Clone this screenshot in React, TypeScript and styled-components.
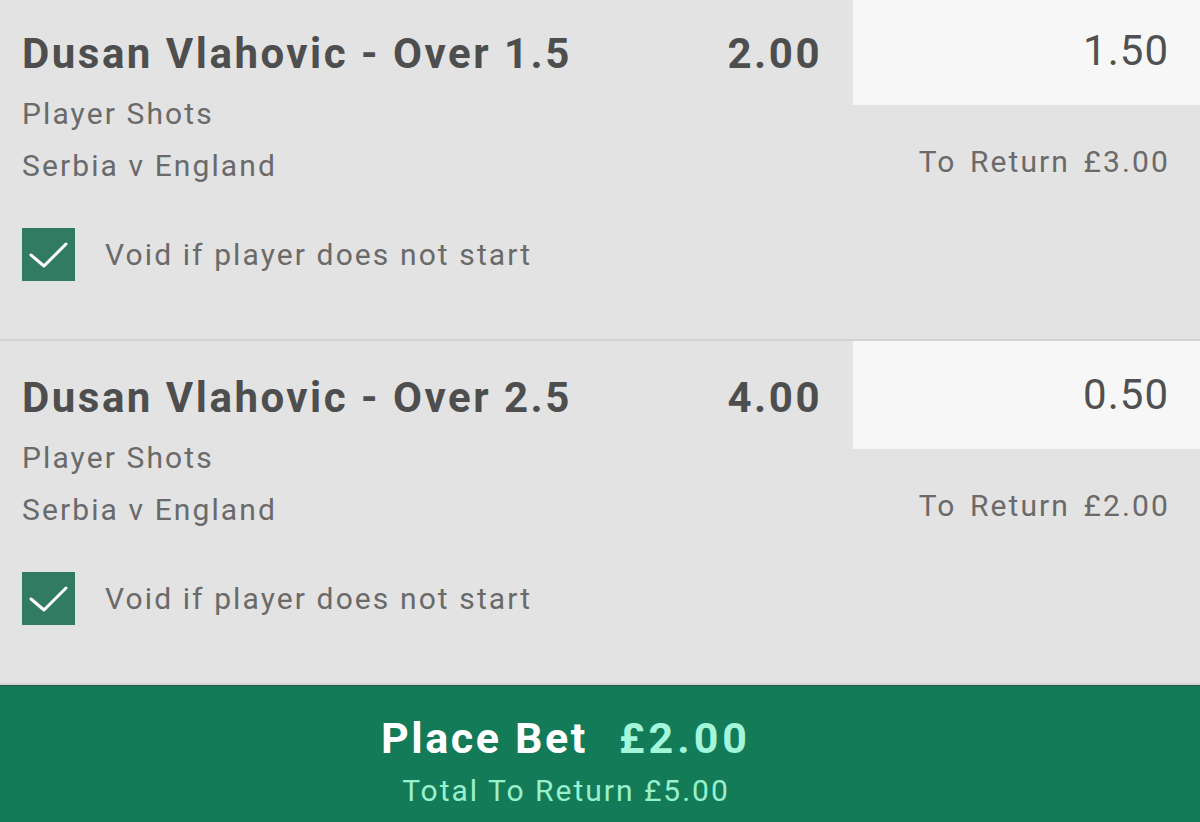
import React from 'react'
import styled, { createGlobalStyle } from 'styled-components'

const GlobalStyle = createGlobalStyle`
  html, body {
    margin: 0;
    padding: 0;
    background: #e3e3e3;
    font-family: Roboto, "Liberation Sans", Arial, sans-serif;
    -webkit-font-smoothing: antialiased;
  }
`

const BetSlip = styled.div`
  width: 1200px;
  height: 822px;
  overflow: hidden;
  display: flex;
  flex-direction: column;
  background: #e3e3e3;
`

const Selection = styled.section<{ $first?: boolean }>`
  box-sizing: border-box;
  height: 344px;
  flex-shrink: 0;
  margin-top: ${p => (p.$first ? '-3px' : '0')};
  display: grid;
  grid-template-columns: 1fr 347px;
  border-bottom: 2px solid #d3d3d3;
`

const Details = styled.div`
  padding: 32px 0 0 22px;
  display: flex;
  flex-direction: column;
`

const Header = styled.div`
  display: flex;
  align-items: center;
  justify-content: space-between;
  padding-right: 31px;
`

const Title = styled.h2`
  margin: 0;
  font-size: 42px;
  line-height: 50px;
  font-weight: 700;
  letter-spacing: 2.5px;
  color: #4e4e4e;
`

const Odds = styled.span`
  font-size: 42px;
  line-height: 50px;
  font-weight: 700;
  letter-spacing: 2.5px;
  color: #4e4e4e;
`

const Meta = styled.div<{ $gap?: number }>`
  margin-top: ${p => p.$gap ?? 0}px;
  font-size: 30px;
  line-height: 52px;
  letter-spacing: 2.1px;
  color: #6a6a6a;
`

const VoidOption = styled.label`
  margin-top: 36px;
  display: flex;
  align-items: center;
  gap: 30px;
  font-size: 30px;
  line-height: 53px;
  letter-spacing: 2.1px;
  color: #6a6a6a;
`

const Checkbox = styled.span`
  width: 53px;
  height: 53px;
  flex-shrink: 0;
  background: #317b63;
  display: flex;
  align-items: center;
  justify-content: center;
`

const StakeColumn = styled.div`
  display: flex;
  flex-direction: column;
  align-items: stretch;
`

const Stake = styled.div`
  height: 108px;
  line-height: 108px;
  background: #f7f7f7;
  text-align: right;
  padding-right: 31px;
  font-size: 42px;
  letter-spacing: 1px;
  color: #505050;
`

const Returns = styled.div`
  margin-top: 31px;
  text-align: right;
  padding-right: 30px;
  font-size: 30px;
  line-height: 52px;
  letter-spacing: 2.1px;
  word-spacing: 4px;
  color: #6a6a6a;
`

const PlaceBet = styled.footer`
  flex: 1;
  background: #147b59;
  border-top: 1px solid #2f5a49;
  padding: 27px 68px 0 0;
  display: flex;
  flex-direction: column;
  align-items: center;
`

const PlaceRow = styled.div`
  display: flex;
  gap: 31px;
  font-size: 43px;
  line-height: 50px;
  font-weight: 700;
`

const PlaceLabel = styled.span`
  letter-spacing: 2.6px;
  color: #ffffff;
`

const PlaceAmount = styled.span`
  letter-spacing: 4px;
  color: #a3f6d9;
`

const TotalReturn = styled.div`
  margin-top: 8px;
  font-size: 30px;
  line-height: 40px;
  letter-spacing: 2px;
  color: #98f0cc;
`

const Tick = () => (
  <svg width="53" height="53" viewBox="0 0 53 53" fill="none">
    <path d="M9 27 L22 38 L44 16" stroke="#ffffff" strokeWidth="3" strokeLinecap="round" strokeLinejoin="round" />
  </svg>
)

type Bet = {
  title: string
  odds: string
  stake: string
  toReturn: string
}

const bets: Bet[] = [
  { title: 'Dusan Vlahovic - Over 1.5', odds: '2.00', stake: '1.50', toReturn: '£3.00' },
  { title: 'Dusan Vlahovic - Over 2.5', odds: '4.00', stake: '0.50', toReturn: '£2.00' },
]

const App: React.FC = () => {
  return (
    <>
      <GlobalStyle />
      <BetSlip>
        {bets.map((bet, i) => (
          <Selection key={bet.title} $first={i === 0}>
            <Details>
              <Header>
                <Title>{bet.title}</Title>
                <Odds>{bet.odds}</Odds>
              </Header>
              <Meta $gap={9}>Player Shots</Meta>
              <Meta>Serbia v England</Meta>
              <VoidOption>
                <Checkbox>
                  <Tick />
                </Checkbox>
                Void if player does not start
              </VoidOption>
            </Details>
            <StakeColumn>
              <Stake>{bet.stake}</Stake>
              <Returns>To Return {bet.toReturn}</Returns>
            </StakeColumn>
          </Selection>
        ))}
        <PlaceBet>
          <PlaceRow>
            <PlaceLabel>Place Bet</PlaceLabel>
            <PlaceAmount>£2.00</PlaceAmount>
          </PlaceRow>
          <TotalReturn>Total To Return £5.00</TotalReturn>
        </PlaceBet>
      </BetSlip>
    </>
  )
}

export default App
